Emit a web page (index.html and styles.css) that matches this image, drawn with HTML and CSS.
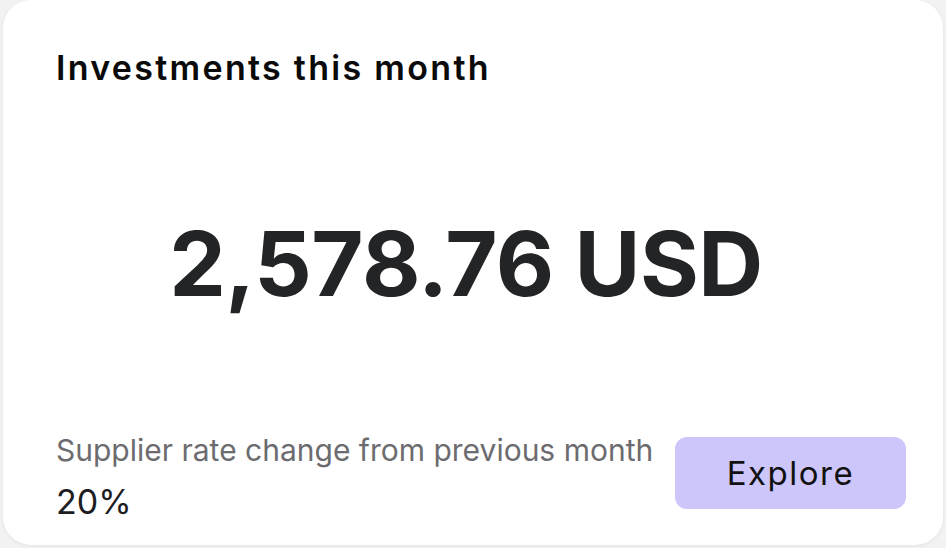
FILE: index.html
```html
<!DOCTYPE html>
<html>
<head>
<meta charset="utf-8">
<link rel="stylesheet" href="styles.css">
</head>
<body>
<div class="card">
  <h2 class="title">Investments this month</h2>
  <div class="amount">2,578.76 USD</div>
  <div class="footer">
    <div class="rate">
      <div class="rate-label">Supplier rate change from previous month</div>
      <div class="rate-value">20%</div>
    </div>
    <button class="explore">Explore</button>
  </div>
</div>
</body>
</html>
```
FILE: styles.css
```css
html, body {
  margin: 0;
  padding: 0;
  background: #f2f2f2;
  width: 946px;
  height: 548px;
  overflow: hidden;
}
body {
  padding: 0 3px 3px 3px;
  box-sizing: border-box;
  font-family: Inter, "Noto Sans", sans-serif;
}
.card {
  background: #fff;
  border-radius: 28px;
  height: 545px;
  box-sizing: border-box;
  padding: 46px 37px 11px 53px;
  display: flex;
  flex-direction: column;
  box-shadow: 0 1px 4px rgba(0,0,0,0.06);
}
.title {
  margin: 0;
  font-family: Inter, sans-serif;
  font-weight: 600;
  font-size: 34px;
  color: #0a0a0a;
  letter-spacing: 2.3px;
  line-height: 44px;
}
.amount {
  flex: 1;
  display: flex;
  align-items: center;
  justify-content: center;
  font-weight: 700;
  font-size: 90px;
  color: #232426;
  letter-spacing: -0.5px;
  padding-top: 36px;
  padding-bottom: 30px;
  padding-right: 30px;
}
.footer {
  display: flex;
  align-items: flex-end;
  justify-content: space-between;
}
.rate-label {
  font-size: 30px;
  color: #6c6c70;
  line-height: 40px;
}
.rate-value {
  font-size: 34px;
  color: #1d1d1f;
  line-height: 64px;
}
.explore {
  border: none;
  background: #cdc6fb;
  border-radius: 12px;
  width: 231px;
  height: 72px;
  margin-bottom: 25px;
  font-family: Inter, sans-serif;
  font-size: 33px;
  letter-spacing: 1.5px;
  color: #111111;
}
```
